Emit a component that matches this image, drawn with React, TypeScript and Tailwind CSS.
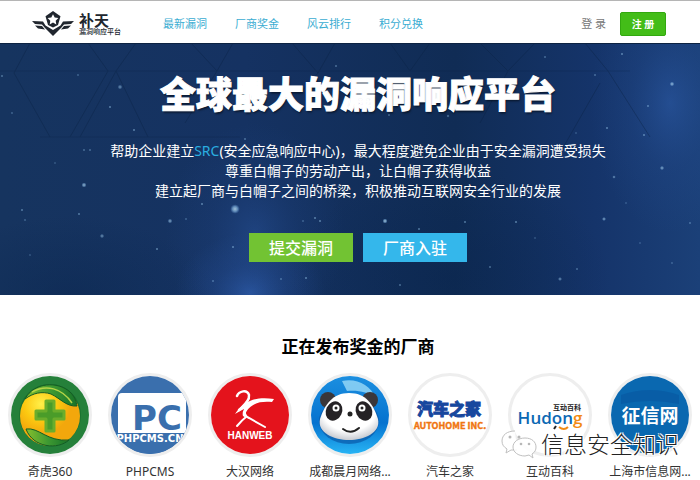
import React from "react";

const CJK = "font-['Noto_Sans','Noto_Sans_CJK_SC',sans-serif]";

const navLinks = ["最新漏洞", "厂商奖金", "风云排行", "积分兑换"];

const stars: [number, number, number, number][] = [
  [235, 166, 3.2, 0.8], [120, 44, 1.6, 0.5], [84, 142, 1.7, 0.7], [170, 178, 1.6, 0.6], [102, 193, 1.5, 0.5],
  [134, 87, 1, 0.5], [110, 64, 1, 0.5], [12, 70, 0.8, 0.4], [22, 167, 0.9, 0.5], [79, 171, 0.9, 0.5],
  [202, 161, 1, 0.5], [157, 206, 1, 0.5], [213, 238, 0.8, 0.5], [233, 204, 1, 0.5], [186, 176, 0.8, 0.4],
  [315, 175, 1, 0.5], [320, 178, 1, 0.5], [303, 178, 0.8, 0.4], [281, 236, 0.9, 0.4], [306, 235, 1, 0.5],
  [385, 178, 1.7, 0.8], [419, 186, 0.9, 0.5], [465, 179, 0.9, 0.5], [516, 179, 1, 0.5], [400, 242, 1, 0.4],
  [490, 224, 1, 0.4], [560, 236, 1.4, 0.5], [604, 176, 1.4, 0.6], [577, 226, 0.9, 0.4], [672, 41, 1.6, 0.7],
  [662, 125, 1.5, 0.6], [644, 92, 1, 0.5], [607, 85, 1, 0.5], [614, 134, 1.2, 0.5], [595, 32, 0.9, 0.4],
  [545, 14, 0.9, 0.4], [622, 11, 1, 0.5], [448, 73, 1.1, 0.4], [389, 72, 0.9, 0.4], [648, 63, 0.9, 0.5],
  [2, 33, 1, 0.4], [78, 32, 0.8, 0.4], [245, 96, 1, 0.4], [84, 107, 0.9, 0.4], [90, 107, 0.9, 0.4],
  [25, 177, 0.8, 0.4], [30, 212, 0.8, 0.3], [535, 195, 0.8, 0.3], [690, 180, 0.9, 0.4], [640, 200, 0.8, 0.3],
  [626, 160, 0.8, 0.3], [672, 220, 0.9, 0.3], [576, 90, 0.8, 0.3], [336, 23, 1, 0.4], [55, 120, 0.8, 0.3],
];

function Sky() {
  return (
    <svg aria-hidden="true" className="absolute inset-0 h-full w-full" viewBox="0 0 700 252" preserveAspectRatio="xMidYMid slice">
      <defs>
        <linearGradient id="sky" x1="0" x2="1" y1="0" y2="0">
          <stop offset="0" stopColor="#16345f" />
          <stop offset="0.35" stopColor="#153262" />
          <stop offset="0.65" stopColor="#102c55" />
          <stop offset="0.85" stopColor="#15346a" />
          <stop offset="1" stopColor="#1b4078" />
        </linearGradient>
        <radialGradient id="glow">
          <stop offset="0" stopColor="#3467bd" stopOpacity="0.8" />
          <stop offset="0.5" stopColor="#264f97" stopOpacity="0.4" />
          <stop offset="1" stopColor="#264f97" stopOpacity="0" />
        </radialGradient>
        <radialGradient id="shade">
          <stop offset="0" stopColor="#07234b" stopOpacity="0.4" />
          <stop offset="1" stopColor="#07234b" stopOpacity="0" />
        </radialGradient>
        <radialGradient id="star">
          <stop offset="0" stopColor="#c5e4f5" />
          <stop offset="0.5" stopColor="#8fbfe4" stopOpacity="0.8" />
          <stop offset="1" stopColor="#6aa0dc" stopOpacity="0" />
        </radialGradient>
      </defs>
      <rect width="700" height="252" fill="url(#sky)" />
      <ellipse cx="250" cy="250" rx="75" ry="60" fill="url(#glow)" opacity="0.8" />
      <ellipse cx="255" cy="190" rx="90" ry="110" fill="url(#glow)" opacity="0.4" />
      <ellipse cx="670" cy="60" rx="80" ry="130" fill="url(#glow)" opacity="0.5" />
      <ellipse cx="450" cy="235" rx="160" ry="110" fill="url(#shade)" />
      <ellipse cx="70" cy="252" rx="140" ry="80" fill="url(#shade)" />
      <g stroke="#0b2345" strokeWidth="1" opacity="0.4" fill="none">
        <path d="M0 28H630M40 94H240" opacity="0.6" />
        <path d="M88 0 108 28 70 94M136 0 116 28 148 94M116 28 80 94M191 0 217 28 185 80M233 0 217 28M292 0 318 30 300 50M335 0 318 30M390 0 410 28 430 0M480 0 508 28 535 0M508 28 480 80M585 0 608 28 650 94M600 40 560 110M30 0 14 30 50 94" />
      </g>
      {stars.map(([x, y, r, o], i) => (
        <circle key={i} cx={x} cy={y} r={r * 1.5} fill="url(#star)" opacity={o} />
      ))}
      <path d="M0 .5H700" stroke="#0d2342" />
    </svg>
  );
}

function BrandMark() {
  return (
    <svg aria-hidden="true" className="h-[26px] w-11" viewBox="0 0 44 26">
      <g fill="#20262e">
        <path d="M1 10 12 10.5 14.500 14.500 22 19 29.500 14.500 32 10.500 43 10 40 13 33 13.500 30 17 22 25 14 17 11 13.500 4 13Z" />
        <path d="M4 14.500 11 15 14 18.500 7 17.500ZM40 14.500 33 15 30 18.500 37 17.500Z" />
        <path fillRule="evenodd" d="M22 0 29.500 5.300 27 14 22 16.500 17 14 14.500 5.300ZM22 3.200 20.300 6.600 16.600 7.100 19.300 9.700 18.700 13.400 22 11.600 25.300 13.400 24.700 9.700 27.400 7.100 23.700 6.600Z" />
      </g>
    </svg>
  );
}

function Qihoo() {
  return (
    <>
      <defs>
        <radialGradient id="gold" cx="0.35" cy="0.3">
          <stop offset="0" stopColor="#fff04a" />
          <stop offset="0.55" stopColor="#fcc911" />
          <stop offset="1" stopColor="#f3a70c" />
        </radialGradient>
        <linearGradient id="leaf" x1="0" x2="1">
          <stop offset="0" stopColor="#86bf2d" />
          <stop offset="0.5" stopColor="#3f9a32" />
          <stop offset="1" stopColor="#177329" />
        </linearGradient>
      </defs>
      <circle cx="42" cy="42" r="39" fill="#25803a" />
      <circle cx="42" cy="42" r="31" fill="#1b7230" />
      <circle cx="42" cy="43" r="30" fill="url(#gold)" />
      <path d="M17 26C26 9 50 8 62 19c6 6 6 10 7 14-10 1-16-7-26-12-9-3-18-1-26 5Z" fill="url(#leaf)" stroke="#135c25" />
      <path d="M24 19c14-8 30-4 40 11" stroke="#b5d447" strokeWidth="1.500" fill="none" />
      <path d="M18 56c13-2 21 13 43 11-11 10-36 8-43-11Z" fill="url(#leaf)" stroke="#135c25" />
      <path d="M38 28h8v10h10v8H46v12h-8V46H28v-8h10Z" fill="#4a9c29" stroke="#6aad2c" strokeWidth="3" strokeLinejoin="round" />
    </>
  );
}

function Phpcms() {
  return (
    <>
      <clipPath id="pc"><circle cx="42" cy="42" r="39" /></clipPath>
      <g clipPath="url(#pc)">
        <rect width="84" height="84" fill="#3a6fad" />
        <path d="M14 20H76Q78 20 78 24V60H10V24Q10 20 14 20Z" fill="#fff" />
        <text x="49" y="57" textAnchor="middle" fontSize="34" fill="#3a6fad" className="font-['DejaVu_Sans',sans-serif] font-bold">PC</text>
        <rect y="60" width="84" height="24" fill="#3a6fad" />
        <text x="42" y="69" textAnchor="middle" fontSize="10" fill="#fff" className="font-['DejaVu_Sans',sans-serif] font-bold">PHPCMS.CN</text>
      </g>
    </>
  );
}

function Hanweb() {
  return (
    <>
      <circle cx="42" cy="42" r="39" fill="#e4131c" />
      <g fill="none" stroke="#fff" strokeLinecap="round">
        <path d="M29 23C31 18 39 16 41 22C42 28 35 33 31 37" strokeWidth="2.500" />
        <path d="M38 36C36 40 37 43 41 45L57 54" strokeWidth="2" />
        <path d="M38 44Q34 47 29 53" strokeWidth="2" />
      </g>
      <path d="M27 41C36 28 48 23 66 26L64 29C52 28 44 30 38 39Q37 42 38 45L35 43Q34 40 36 36Q32 38 27 41Z" fill="#fff" />
      <text x="42" y="66" textAnchor="middle" fontSize="10" fill="#fff" className="font-['Liberation_Sans',sans-serif] font-bold">HANWEB</text>
    </>
  );
}

function Panda() {
  return (
    <>
      <defs>
        <linearGradient id="blue" x2="0" y2="1">
          <stop offset="0" stopColor="#1c8fe0" />
          <stop offset="0.6" stopColor="#0572cf" />
          <stop offset="1" stopColor="#28b4f4" />
        </linearGradient>
        <radialGradient id="face" cx="0.5" cy="0.35" r="0.65">
          <stop offset="0.7" stopColor="#fff" />
          <stop offset="1" stopColor="#c9ccd2" />
        </radialGradient>
      </defs>
      <circle cx="42" cy="42" r="39" fill="url(#blue)" />
      <path d="M34 8c15-3 28 4 34 17-8-6-18-8-29-7Z" fill="#9adaf8" opacity="0.8" />
      <circle cx="20" cy="27" r="8" fill="#3a3639" />
      <circle cx="62" cy="27" r="8" fill="#3a3639" />
      <ellipse cx="41" cy="48" rx="30" ry="23" fill="#064f9e" opacity="0.6" />
      <path d="M41 20C58 20 65 31 70 46c3 14-14 21-29 21S9 60 12 46C17 31 25 20 41 20Z" fill="url(#face)" />
      <ellipse cx="26" cy="38" rx="8" ry="10" fill="#252225" transform="rotate(25 26 38)" />
      <ellipse cx="56" cy="38" rx="8" ry="10" fill="#252225" transform="rotate(-25 56 38)" />
      <circle cx="28" cy="35" r="3.500" fill="#fff" /><circle cx="54" cy="35" r="3.500" fill="#fff" />
      <circle cx="28" cy="35" r="1.500" fill="#222" /><circle cx="54" cy="35" r="1.500" fill="#222" />
      <circle cx="42" cy="41" r="2.500" fill="#222" />
      <path d="M35 56q8 6 16-1" stroke="#222" strokeWidth="2" fill="none" strokeLinecap="round" />
    </>
  );
}

function Autohome() {
  return (
    <>
      <text x="41" y="42" textAnchor="middle" fontSize="16" fill="#17479e" stroke="#17479e" className="font-['Noto_Sans_CJK_SC',sans-serif] font-black">汽车之家</text>
      <text x="42" y="56" textAnchor="middle" fontSize="9" fill="#f0750f" stroke="#f0750f" strokeWidth="0.4" className="font-['Noto_Sans_CJK_SC',sans-serif] font-bold">AUTOHOME INC.</text>
    </>
  );
}

function Hudong() {
  return (
    <>
      <text x="59" y="37" textAnchor="middle" fontSize="7" fill="#222" className="font-['Noto_Sans_CJK_SC',sans-serif] font-bold">互动百科</text>
      <text x="42" y="51" textAnchor="middle" fontSize="17" fill="#0c68b3" className="font-['Open_Sans',sans-serif] font-semibold">Hudon<tspan fill="#f28b13">g</tspan></text>
      <path d="M48 53l-2 3" stroke="#222" strokeWidth="2" />
      <path d="M51 54q5 4 9 0" stroke="#f28b13" strokeWidth="2" fill="none" />
    </>
  );
}

function Credit() {
  return (
    <>
      <circle cx="42" cy="42" r="39" fill="#0a68b0" />
      <path d="M13 22Q42 12 71 22V31Q42 25 13 31Z" fill="#0757a0" opacity="0.6" />
      <text x="42" y="50" textAnchor="middle" fontSize="19" fill="#fff" className="font-['Noto_Sans_CJK_SC',sans-serif] font-bold">征信网</text>
    </>
  );
}

const vendors = [
  { name: "奇虎360", Logo: Qihoo },
  { name: "PHPCMS", Logo: Phpcms },
  { name: "大汉网络", Logo: Hanweb },
  { name: "成都晨月网络...", Logo: Panda },
  { name: "汽车之家", Logo: Autohome },
  { name: "互动百科", Logo: Hudong },
  { name: "上海市信息网...", Logo: Credit },
];

function Watermark() {
  return (
    <div className="pointer-events-none absolute right-[21px] bottom-5 flex items-center gap-1">
      <svg aria-hidden="true" className="h-8 w-9" viewBox="0 0 36 32" fill="#fff" fillOpacity="0.85" stroke="#c0c0c0" strokeLinejoin="round">
        <path d="M14 3C6 3 1 7 1 13c0 4 2 6 5 8l-1 4 5-3h6" />
        <path d="M24 10c-7 0-12 4-12 9s5 9 12 9l4-1 4 3-1-4c3-2 4-4 4-7 0-5-4-9-11-9Z" />
        <g fill="#aaa" stroke="none"><circle cx="9" cy="9" r="1.500" /><circle cx="18" cy="9" r="1.500" /><circle cx="20" cy="16" r="1.300" /><circle cx="28" cy="16" r="1.300" /></g>
      </svg>
      <span className="text-[23px] leading-8 font-light text-[#222] [text-shadow:-1px_-1px_0_#fff,1px_-1px_0_#fff,-1px_1px_0_#fff,1px_1px_0_#fff]">信息安全知识</span>
    </div>
  );
}

export default function App() {
  return (
    <div className={`bg-white text-black ${CJK}`} lang="zh-CN">
      <header className="flex h-[43px] items-center border-t border-[#b5b5b5] pt-1 pr-[34px] pl-[31px]">
        <a href="#" className="flex items-center gap-1">
          <BrandMark />
          <span className="flex flex-col text-[#20262e]">
            <span className="text-[15px] leading-4 font-bold">补天</span>
            <span className="text-[7px] leading-2 font-medium">漏洞响应平台</span>
          </span>
        </a>
        <nav className="ml-[42px] flex gap-7">
          {navLinks.map((t) => (
            <a key={t} href="#" className="text-[11px] leading-4 whitespace-nowrap text-[#3badd2]">{t}</a>
          ))}
        </nav>
        <a href="#" className="ml-auto text-[11px] leading-4 whitespace-nowrap text-[#777]">登 录</a>
        <button className="ml-[14px] h-6 w-[46px] rounded-[2px] border border-[#32a80f] bg-[#43bd18] text-[10px] leading-4 font-bold text-white">注 册</button>
      </header>

      <main>
        <section className="relative overflow-hidden bg-[#15325f]">
          <Sky />
          <div className="relative flex flex-col items-center pt-8 pb-[33px] pl-4 text-center text-white">
            <h1 className="text-[36px] leading-10 font-black [-webkit-text-stroke:1px_white] [text-shadow:1px_2px_2px_rgba(0,0,0,0.5)]">全球最大的漏洞响应平台</h1>
            <p className="mt-[26px] text-[14px] leading-5">
              帮助企业建立<span className="text-[#2aaee0]">SRC</span>(安全应急响应中心)，最大程度避免企业由于安全漏洞遭受损失
              <br />
              尊重白帽子的劳动产出，让白帽子获得收益
              <br />
              建立起厂商与白帽子之间的桥梁，积极推动互联网安全行业的发展
            </p>
            <div className="mt-8 flex gap-[10px]">
              <button className="h-[29px] w-[104px] bg-[#72c333] text-[16px] leading-5 font-medium">提交漏洞</button>
              <button className="h-[29px] w-[104px] bg-[#34b7eb] text-[16px] leading-5 font-medium">厂商入驻</button>
            </div>
          </div>
        </section>

        <section className="relative pt-10">
          <h2 className="pl-4 text-center text-[17px] leading-6 font-bold">正在发布奖金的厂商</h2>
          <ul className="mt-[14px] grid grid-cols-7">
            {vendors.map(({ name, Logo }) => (
              <li key={name}>
                <a href="#" className="flex flex-col items-center">
                  <svg aria-hidden="true" className="h-[84px] w-[84px]" viewBox="0 0 84 84">
                    <circle cx="42" cy="42" r="40.500" fill="#fff" stroke="#eeeeee" strokeWidth="3" />
                    <Logo />
                  </svg>
                  <span className="mt-[7px] text-[12px] leading-4 whitespace-nowrap text-[#333]">{name}</span>
                </a>
              </li>
            ))}
          </ul>
          <Watermark />
        </section>
      </main>
    </div>
  );
}
